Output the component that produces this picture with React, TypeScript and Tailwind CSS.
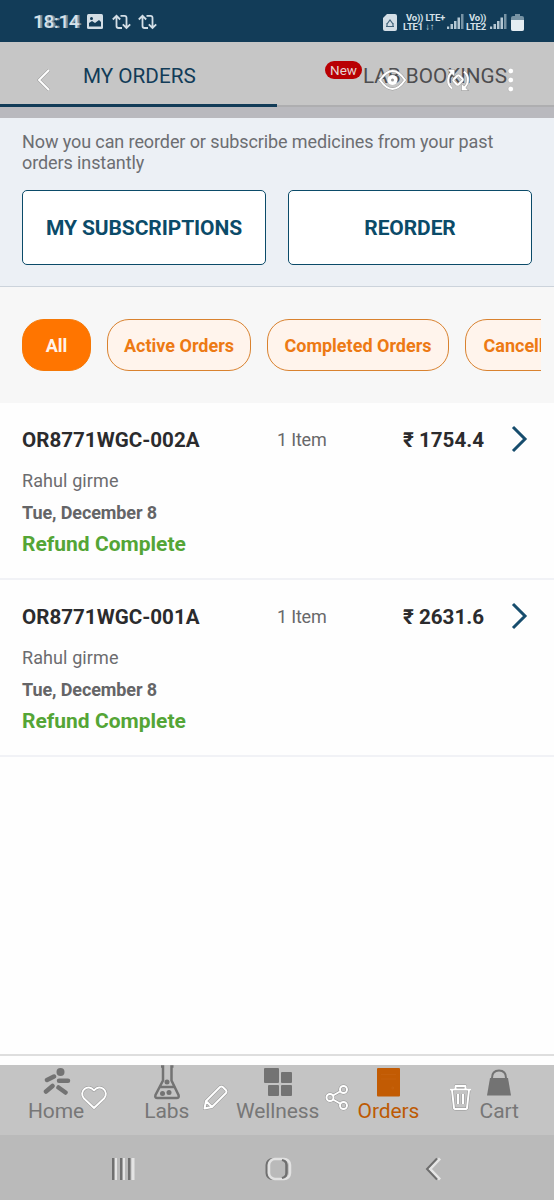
import { clsx } from "clsx";

const roboto = "font-['Roboto',sans-serif]";

const filters = [
  { label: "All", width: "w-[69px]", active: true },
  { label: "Active Orders", width: "w-[144px]", active: false },
  { label: "Completed Orders", width: "w-[182px]", active: false },
  { label: "Cancelled Orders", width: "w-[176px]", active: false },
];

const orders = [
  { id: "OR8771WGC-002A", price: "₹ 1754.4" },
  { id: "OR8771WGC-001A", price: "₹ 2631.6" },
];

function Repeat() {
  return (
    <svg width="19" height="16" viewBox="0 0 19 16" fill="none" stroke="#d3dee6" strokeWidth="1.8">
      <path d="M.8 5.500L4.500 1.800l3.700 3.700M4.500 2.500v9.500q0 2 2 2h3.500M8.500 1.800h4q2 0 2 2V13M10.800 10.300l3.700 3.700 3.700-3.700" />
    </svg>
  );
}

function Signal() {
  return (
    <svg width="17" height="16" viewBox="0 0 17 16">
      <path d="M0 12.500h2.200v2.500H0zM3.500 10h2.500v5h-2.500zM7 7h2.500v8H7zM10.500 3.500H13V15h-2.500z" fill="#b5c8d4" />
      <path d="M14 0h2.500v15H14z" fill="#7793a4" />
    </svg>
  );
}

function StatusBar() {
  return (
    <div className={`flex h-[42px] items-center bg-[#123c58] pl-[33px] pt-[2px] text-[#d6e1e9] ${roboto}`}>
      <div className="relative w-[54px] text-[19px] font-medium leading-[22px] tracking-[-0.4px]">
        <span>18:14</span>
        <span className="absolute left-[2px] top-0 opacity-50">18:14</span>
      </div>
      <svg className="-mt-[2px]" width="16" height="15" viewBox="0 0 16 15">
        <rect width="16" height="15" rx="1.500" fill="#d3dee6" />
        <path d="M2 12.500V9l3-2 3 2 4-3 2 2v4.500z" fill="#123c58" />
        <circle cx="4.500" cy="4.500" r="1.500" fill="#123c58" />
      </svg>
      <div className="-mt-[1px] ml-[9px] flex gap-[7px]">
        <Repeat />
        <Repeat />
      </div>
      <svg className="ml-[226px]" width="14" height="17" viewBox="0 0 14 17">
        <path d="M4 0h8q2 0 2 2v13q0 2-2 2H2q-2 0-2-2V4z" fill="#d3dee6" />
        <path d="M4 10l3-4 3 4M3 12.500h8M4 9v3M10 9v3" fill="none" stroke="#41637a" strokeWidth="1.200" />
      </svg>
      <div className="ml-[6px] w-[43px] whitespace-nowrap text-[9.5px] font-bold leading-[9px] tracking-[-0.2px]">
        <div className="pl-[3px]">Vo)) LTE+</div>
        <div>LTE1 ↓↑</div>
      </div>
      <div className="ml-[1px]"><Signal /></div>
      <div className="ml-[2px] w-[23px] whitespace-nowrap text-[9.5px] font-bold leading-[9px] tracking-[-0.2px]">
        <div className="pl-[3px]">Vo))</div>
        <div>LTE2</div>
      </div>
      <div className="ml-[1px]"><Signal /></div>
      <svg className="ml-[4px]" width="13" height="17" viewBox="0 0 13 17">
        <path d="M2 2h2V0h5v2h2q2 0 2 2v11q0 2-2 2H2q-2 0-2-2V4q0-2 2-2z" fill="#7793a4" />
        <path d="M0 6h13v9q0 2-2 2H2q-2 0-2-2z" fill="#e4edf2" />
      </svg>
    </div>
  );
}

function Header() {
  return (
    <div className={`relative ${roboto}`}>
      <div className="flex h-[65px] bg-[#c6c6c6] text-[20.7px] leading-[69px]">
        <div className="w-[277px] border-b-[3px] border-[#123c58] pl-[83px] text-[#123c58]">MY ORDERS</div>
        <div className="relative flex-1 whitespace-nowrap border-b-2 border-[#aeaeb0] pl-[86px] text-[#4d4d4f]">
          <span className="absolute left-[48px] top-[19px] h-[18px] w-[37px] rounded-full bg-[#b90003] text-center text-[13.5px] leading-[19px] text-[#e5d4d4]">
            New
          </span>
          LAB BOOKINGS
        </div>
      </div>
      <div className="h-[11px] bg-[#b9b9be]" />
      {/* gallery viewer controls over the tabs */}
      <svg className="absolute left-[36px] top-[26px]" width="15" height="24" viewBox="0 0 15 24" fill="none">
        <path d="M13 2L3 12l10 10" stroke="#999" strokeWidth="3" />
        <path d="M13 2L3 12l10 10" stroke="#fff" strokeWidth="2" />
      </svg>
      <svg className="absolute left-[378px] top-[27px]" width="29" height="22" viewBox="0 0 29 22" fill="none">
        <path d="M2 11Q14.500-7 27 11Q14.500 29 2 11z" stroke="#999" strokeWidth="3" />
        <path d="M2 11Q14.500-7 27 11Q14.500 29 2 11z" stroke="#fff" strokeWidth="2" />
        <circle cx="14.500" cy="11" r="5" fill="#fff" />
        <circle cx="14.500" cy="11" r="1.500" fill="#999" />
      </svg>
      <svg className="absolute left-[445px] top-[25px]" width="26" height="26" viewBox="0 0 26 26" fill="none">
        {["#999", "#fff"].map((c, i) => (
          <g key={c} stroke={c} strokeWidth={i ? 2 : 2.8}>
            <path d="M7 21.500A10.500 10.500 0 0 1 8 4.500M19 4.500A10.500 10.500 0 0 1 18 21.500" />
            <path d="M3.500 3h5.500v5.500zM22.500 23H17v-5.500z" fill={c} strokeWidth={i ? 0.5 : 1.5} />
            <rect x="9.500" y="9" width="7" height="8" rx="1.500" transform="rotate(45 13 13)" />
          </g>
        ))}
      </svg>
      <svg className="absolute left-[507px] top-[26px]" width="8" height="24" viewBox="0 0 8 24" fill="#fff" stroke="#aaa" strokeWidth="0.500">
        <circle cx="3.800" cy="3" r="2.800" />
        <circle cx="3.800" cy="12" r="2.800" />
        <circle cx="3.800" cy="21" r="2.800" />
      </svg>
    </div>
  );
}

function Actions() {
  return (
    <div className={`h-[169px] border-b border-[#ccd3db] bg-[#ecf0f5] px-[22px] pt-[13px] ${roboto}`}>
      <p className="w-[510px] whitespace-nowrap text-[18px] leading-[21px] tracking-[-0.1px] text-[#6c6e72]">
        Now you can reorder or subscribe medicines from your past
        <br />
        orders instantly
      </p>
      <div className="mt-[17px] flex gap-[22px] text-[21px] font-bold tracking-[-0.1px] text-[#0b4b69]">
        <button className="h-[75px] w-[244px] rounded-[5px] border border-[#0b4b69] bg-white pt-[3px]">MY SUBSCRIPTIONS</button>
        <button className="h-[75px] w-[244px] rounded-[5px] border border-[#0b4b69] bg-white pt-[3px]">REORDER</button>
      </div>
    </div>
  );
}

function Filters() {
  return (
    <div className="h-[116px] bg-[#f7f7f7] pl-[22px] pr-[13px] pt-[32px]">
      <div className={`flex gap-[16px] overflow-hidden text-[18px] font-bold ${roboto}`}>
        {filters.map((f) => (
          <button
            key={f.label}
            className={clsx(
              "h-[52px] shrink-0 whitespace-nowrap rounded-[22px] border",
              f.width,
              f.active ? "border-[#f57806] bg-[#ff7500] text-[#fff3ea]" : "border-[#d9822f] bg-[#fff4ec] text-[#ed7a14]"
            )}
          >
            {f.label}
          </button>
        ))}
      </div>
    </div>
  );
}

function Order({ id, price }: { id: string; price: string }) {
  return (
    <div className={`h-[177px] border-b-2 border-[#f1f2f6] pl-[22px] pt-[24px] ${roboto}`}>
      <div className="flex h-[26px] items-center">
        <div className="w-[255px] text-[20.6px] font-bold text-[#2b2b2d]">{id}</div>
        <div className="-mt-[2px] w-[107px] text-[18px] tracking-[-0.2px] text-[#68686a]">1 Item</div>
        <div className="w-[100px] text-right text-[20.6px] font-bold text-[#2b2b2d]">{price}</div>
        <svg className="-mt-[3px] ml-[27px]" width="17" height="28" viewBox="0 0 17 28" fill="none" stroke="#174d6d" strokeWidth="3">
          <path d="M2 2l12 12L2 26" />
        </svg>
      </div>
      <div className="mt-[16px] h-[24px] text-[18px] leading-[24px] tracking-[0.1px] text-[#6c6c6e]">Rahul girme</div>
      <div className="mt-[8px] h-[24px] text-[18px] font-bold leading-[24px] tracking-[-0.1px] text-[#656567]">Tue, December 8</div>
      <div className="mt-[6px] h-[26px] text-[21px] font-bold leading-[26px] text-[#54a536]">Refund Complete</div>
    </div>
  );
}

function BottomTabs() {
  const label = "absolute left-[56px] top-[33px] -translate-x-1/2 whitespace-nowrap text-[21px] leading-[27px] tracking-[-0.1px]";
  return (
    <div className={`relative grid h-[70px] grid-cols-5 bg-[#c4c4c4] text-[#777] ${roboto}`}>
      <div className="relative">
        <svg className="absolute left-[43px] top-[3px]" width="28" height="28" viewBox="0 0 28 28" fill="none" stroke="#737373" strokeWidth="4.500" strokeLinecap="round">
          <circle cx="17.500" cy="4" r="4" fill="#737373" stroke="none" />
          <path d="M4 12l7-3.500M16 12.800h9M3 23.500l6.500-5.500M15.500 19.500l7 5" />
        </svg>
        <span className={label}>Home</span>
      </div>
      <div className="relative">
        <svg className="absolute left-[42px] top-0" width="28" height="35" viewBox="0 0 28 35" fill="none" stroke="#737373" strokeWidth="2.500">
          <path d="M8 1.500h2v14L2.500 30q-1 3 2 3h19q3 0 2-3l-7-14.500v-14h2M6 22h16" />
          <g fill="#737373" stroke="none">
            <circle cx="14" cy="17" r="2.500" />
            <circle cx="9.500" cy="28.500" r="2.500" />
            <circle cx="16" cy="27.500" r="2.500" />
          </g>
        </svg>
        <span className={label}>Labs</span>
      </div>
      <div className="relative">
        <svg className="absolute left-[42px] top-[3px]" width="29" height="29" viewBox="0 0 29 29" fill="#737373">
          <rect width="15" height="15" rx="1" />
          <rect x="17" y="4" width="11" height="11" rx="1" />
          <rect x="4" y="17" width="11" height="11" rx="1" />
          <rect x="17" y="17" width="11" height="11" rx="1" />
        </svg>
        <span className={label}>Wellness</span>
      </div>
      <div className="relative text-[#bd5a03]">
        <svg className="absolute left-[45px] top-[3px]" width="24" height="29" viewBox="0 0 24 29">
          <rect width="23" height="28.500" rx="1" fill="#c25b03" />
          <path d="M4 6.500h15M4 11h15M15 19h1.500v2H15z" fill="none" stroke="#c76511" strokeWidth="0.600" />
        </svg>
        <span className={label}>Orders</span>
      </div>
      <div className="relative">
        <svg className="absolute left-[44px] top-[4px]" width="24" height="27" viewBox="0 0 24 27">
          <path d="M3 9h18l3 17.500H0z" fill="#737373" />
          <path d="M5 9q0-7.500 7-7.500T19 9" fill="none" stroke="#737373" strokeWidth="2" />
        </svg>
        <span className={label}>Cart</span>
      </div>

      {/* gallery viewer tools over the tabs */}
      <svg className="pointer-events-none absolute left-0 top-0" width="554" height="70" viewBox="0 0 554 70" fill="none">
        {["#929292", "#fff"].map((c, i) => (
          <g key={c} stroke={c} strokeWidth={i ? 2 : 3} strokeLinejoin="round">
            <path d="M94 43l-10-9.500c-6-7 4-15.500 10-8 6-7.500 16 1 10 8z" />
            <path d="M204.500 43.500l1.500-7.500 14-14q1.500-1.200 3 .2l3 3q1 1.300 0 2.800L212 42zM206 36l6 6" />
            <circle cx="343.500" cy="24.500" r="3.500" />
            <circle cx="330" cy="32.500" r="3.500" />
            <circle cx="343.500" cy="40.500" r="3.500" />
            <path d="M333 30.500l7-4M333 34.500l7 4" />
            <path d="M450 24.500h21M455.500 24v-3h10v3M452 25l2 18q0 1 2 1h9q2 0 2-1l2-18M458 29v10M463 29v10" />
          </g>
        ))}
      </svg>
    </div>
  );
}

function SystemNav() {
  return (
    <div className="flex h-[65px] items-center bg-[#bababa] pl-[112px] pt-[3px]">
      <svg width="24" height="22" viewBox="0 0 24 22">
        <path d="M0 0h2.500v22H0zM8 0h2.500v22H8zM16 0h2.500v22H16z" fill="#707070" />
        <path d="M2.800 0h2.200v22H2.800zM10.800 0H13v22h-2.200zM19.500 0h3v22h-3z" fill="#e4e4e4" />
      </svg>
      <svg className="ml-[129px]" width="27" height="24" viewBox="0 0 27 24" fill="none">
        <rect x="1.500" y="2" width="20" height="20" rx="6" stroke="#707070" strokeWidth="2" />
        <rect x="4" y="2" width="21" height="20" rx="6" stroke="#e2e2e2" strokeWidth="2.500" />
        <path d="M17 3q4.500 1 4.500 5v8q0 4-4.500 5" stroke="#707070" strokeWidth="2" />
      </svg>
      <svg className="ml-[133px]" width="17" height="24" viewBox="0 0 17 24" fill="none">
        <path d="M15 1.500L5 12l10 10.500" stroke="#e5e5e5" strokeWidth="2.800" />
        <path d="M12 1.500L2 12l10 10.500" stroke="#6e6e6e" strokeWidth="2" />
      </svg>
    </div>
  );
}

export default function App() {
  return (
    <div className="flex h-[1200px] w-[554px] flex-col overflow-hidden bg-[#fefefe]">
      <StatusBar />
      <Header />
      <Actions />
      <Filters />
      {orders.map((o) => (
        <Order key={o.id} {...o} />
      ))}
      <div className="flex-1" />
      <div className="h-[11px] border-t-2 border-[#dedede]" />
      <BottomTabs />
      <SystemNav />
    </div>
  );
}
